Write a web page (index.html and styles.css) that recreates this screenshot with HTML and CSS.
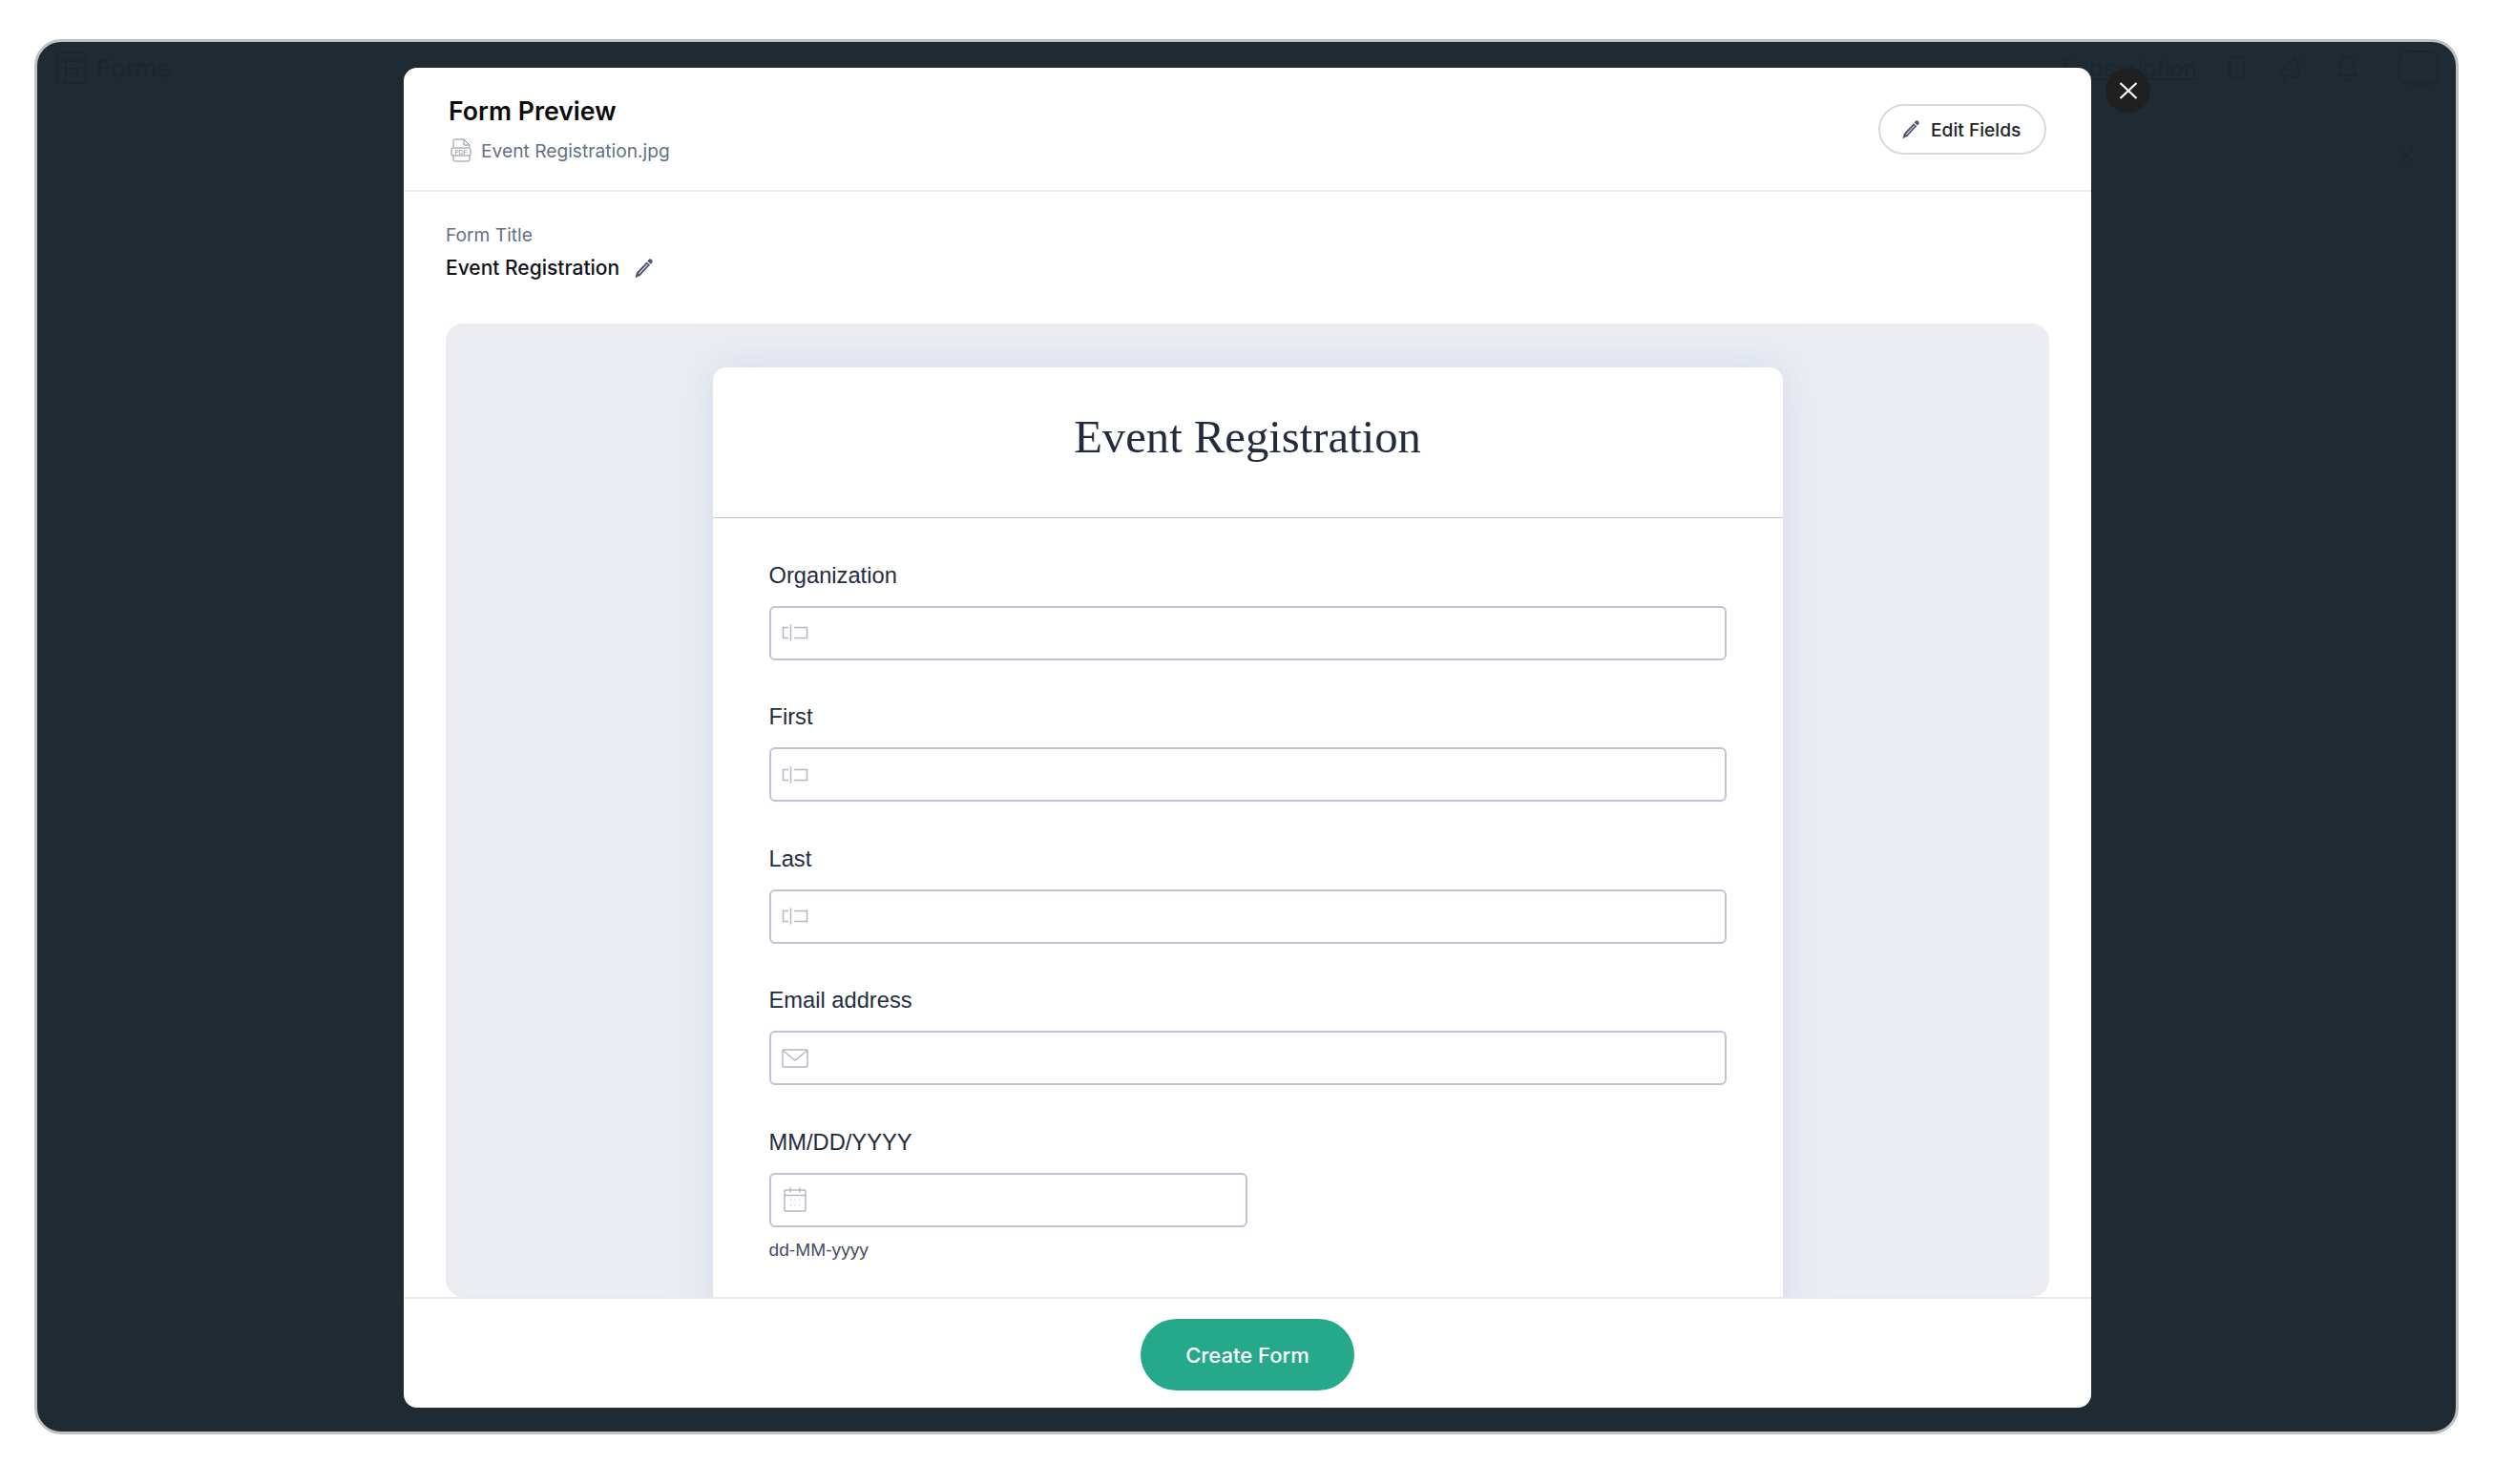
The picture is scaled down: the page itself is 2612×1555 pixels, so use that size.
FILE: index.html
```html
<!DOCTYPE html>
<html lang="en">
<head>
    <meta charset="UTF-8">
    <title>Form Preview</title>
    <link rel="stylesheet" href="styles.css">
</head>
<body>
    <div class="window">
        <div class="topbar">
            <svg class="ghost-logo" width="32" height="34" viewBox="0 0 32 34"><rect x="1" y="1" width="30" height="32" rx="3"/><path d="M1 10h30M10 10v14h12v-6H1M10 24v9"/></svg>
            <span class="ghost-title">Forms</span>
            <span class="ghost-link">Subscription</span>
            <svg class="ghost-icon phone" width="17" height="24" viewBox="0 0 17 24"><rect x="1" y="1" width="15" height="22" rx="2"/></svg>
            <svg class="ghost-icon horn" width="30" height="32" viewBox="0 0 30 32"><path d="M2 22 18 4l4 22-13-2-1 6-3-1 1-5zM24 10l4-3M25 15h4"/></svg>
            <svg class="ghost-icon bell" width="24" height="32" viewBox="0 0 24 32"><path d="M2 24c3-3 3-6 3-12a7 7 0 0 1 14 0c0 6 0 9 3 12zM9 29h6"/></svg>
            <svg class="ghost-icon avatar" width="42" height="36" viewBox="0 0 42 36"><rect x="1" y="1" width="40" height="34" rx="8"/></svg>
        </div>
        <svg class="ghost-x" width="16" height="18" viewBox="0 0 16 18"><path d="M1 1l14 16M15 1 1 17"/></svg>

        <div class="overlay">
            <div class="modal">
                <div class="modal-header">
                    <div>
                        <h1 class="modal-title">Form Preview</h1>
                        <div class="file-name">
                            <svg class="file-icon" width="22" height="25" viewBox="0 0 22 25">
                                <path d="M3 9V2.500A1.500 1.500 0 0 1 4.500 1H14l6 6v2M20 18v4.500a1.500 1.500 0 0 1-1.500 1.500h-14A1.500 1.500 0 0 1 3 22.500V18M14 1v6h6"/>
                                <rect x="1" y="10" width="20" height="8" rx="1"/>
                                <text x="11" y="16.500" text-anchor="middle">PDF</text>
                            </svg>
                            <span>Event Registration.jpg</span>
                        </div>
                    </div>
                    <button class="edit-btn">
                        <svg width="20" height="20" viewBox="0 0 20 20"><path class="pencil" d="M14.600 1.300a2.100 2.100 0 0 1 3.500 2.900l-1 1.200-3.400-2.900zM12.900 3.300l3.400 2.900-9.800 10.600-5 2.400 1.300-5.300z"/><path class="pencil-line" d="M13.800 5.700 5.200 15"/></svg>
                        Edit Fields
                    </button>
                </div>

                <div class="modal-body">
                    <div class="title-label">Form Title</div>
                    <div class="title-row">
                        <span>Event Registration</span>
                        <svg width="21" height="21" viewBox="0 0 20 20"><path class="pencil" d="M14.600 1.300a2.100 2.100 0 0 1 3.500 2.900l-1 1.200-3.400-2.900zM12.900 3.300l3.400 2.900-9.800 10.600-5 2.400 1.300-5.300z"/><path class="pencil-line" d="M13.800 5.700 5.200 15"/></svg>
                    </div>

                    <div class="preview">
                        <div class="paper">
                            <h2 class="paper-title">Event Registration</h2>
                            <div class="paper-fields">
                                <div class="field">
                                    <label>Organization</label>
                                    <div class="input">
                                        <svg class="field-icon" width="28" height="18" viewBox="0 0 28 18"><path d="M7 3.500H1.500v11H7M9.500.500v17M13 3.500h13.500v11H13"/></svg>
                                    </div>
                                </div>
                                <div class="field">
                                    <label>First</label>
                                    <div class="input">
                                        <svg class="field-icon" width="28" height="18" viewBox="0 0 28 18"><path d="M7 3.500H1.500v11H7M9.500.500v17M13 3.500h13.500v11H13"/></svg>
                                    </div>
                                </div>
                                <div class="field">
                                    <label>Last</label>
                                    <div class="input">
                                        <svg class="field-icon" width="28" height="18" viewBox="0 0 28 18"><path d="M7 3.500H1.500v11H7M9.500.500v17M13 3.500h13.500v11H13"/></svg>
                                    </div>
                                </div>
                                <div class="field">
                                    <label>Email address</label>
                                    <div class="input">
                                        <svg class="field-icon" width="28" height="20" viewBox="0 0 28 20"><rect x="1" y="1" width="26" height="18" rx="1"/><path d="M1.500 2 14 12 26.500 2"/></svg>
                                    </div>
                                </div>
                                <div class="field">
                                    <label>MM/DD/YYYY</label>
                                    <div class="input input-short">
                                        <svg class="field-icon calendar" width="24" height="26" viewBox="0 0 24 26"><rect x="1" y="3" width="22" height="22" rx="1"/><path d="M1 8.500h22M7 .500v5M17 .500v5"/><path class="dots" d="M7 13h1M11.500 13h1M16 13h1M7 19h1M11.500 19h1M16 19h1"/></svg>
                                    </div>
                                    <div class="hint">dd-MM-yyyy</div>
                                </div>
                            </div>
                        </div>
                    </div>
                </div>

                <div class="modal-footer">
                    <button class="create-btn">Create Form</button>
                </div>
            </div>
            <button class="close-btn">
                <svg width="20" height="20" viewBox="0 0 20 20"><path d="M1.500 2l17 16M18.500 2l-17 16"/></svg>
            </button>
        </div>
    </div>
</body>
</html>
```

FILE: styles.css
```css
* {
    box-sizing: border-box;
}

html, body {
    height: 100%;
}

body {
    margin: 0;
    padding: 41px 36px 0;
    background-color: white;
    font-family: Inter, "Liberation Sans", sans-serif;
    overflow: hidden;
}

.window {
    position: relative;
    width: 2540px;
    height: 1462px;
    background-color: #1f2a33;
    border: 3px solid #bfc0c1;
    border-radius: 28px;
    overflow: hidden;
}

/* page behind the backdrop, barely visible */
.topbar {
    display: flex;
    align-items: center;
    height: 54px;
    padding: 0 18px 0 20px;
}

.topbar svg {
    fill: none;
    stroke: #1b262e;
    stroke-width: 1.500;
}

.ghost-title {
    margin-left: 10px;
    font-size: 26px;
    font-weight: 500;
    color: #1b262e;
}

.ghost-link {
    margin-left: auto;
    font-size: 24px;
    color: #1b262e;
    text-decoration: underline;
}

.ghost-icon.phone {
    margin-left: 33px;
}

.ghost-icon.horn {
    margin-left: 35px;
}

.ghost-icon.bell {
    margin-left: 30px;
}

.ghost-icon.avatar {
    margin-left: 42px;
}

.ghost-x {
    position: absolute;
    top: 110px;
    right: 43px;
    fill: none;
    stroke: #1b262e;
    stroke-width: 1.500;
}

.overlay {
    position: absolute;
    top: 0;
    left: 0;
    right: 0;
    bottom: 0;
    display: flex;
    align-items: flex-start;
    gap: 15px;
    padding: 27px 0 0 384px;
}

.modal {
    display: flex;
    flex-direction: column;
    width: 1768px;
    height: 1404px;
    background-color: white;
    border-radius: 14px;
    overflow: hidden;
}

.modal-header {
    display: flex;
    align-items: center;
    justify-content: space-between;
    height: 130px;
    padding: 0 47px;
    border-bottom: 2px solid #eceef0;
}

.modal-title {
    margin: 0 0 12px;
    font-size: 26.700px;
    line-height: 33px;
    font-weight: 600;
    color: #0b0b0c;
}

.file-name {
    display: flex;
    align-items: center;
    gap: 10px;
    margin-left: 2px;
    font-size: 19.200px;
    color: #64708a;
}

.file-icon {
    fill: none;
    stroke: #868c9c;
    stroke-width: 1;
}

.file-icon text {
    fill: #868c9c;
    stroke: none;
    font-size: 6.500px;
    font-family: "Liberation Sans", sans-serif;
}

.edit-btn {
    display: flex;
    align-items: center;
    gap: 11px;
    width: 176px;
    height: 53px;
    padding: 2px 0 0 22px;
    font-family: inherit;
    font-size: 19.200px;
    font-weight: 500;
    color: #222427;
    background-color: white;
    border: 2px solid #d3dde0;
    border-radius: 27px;
}

.pencil {
    fill: #4f566f;
}

.pencil-line {
    fill: none;
    stroke: white;
    stroke-width: 1;
}

.modal-body {
    display: flex;
    flex-direction: column;
    flex: 1;
    min-height: 0;
    padding: 32px 44px 0;
}

.title-label {
    font-size: 19.200px;
    line-height: 26px;
    color: #667085;
}

.title-row {
    display: flex;
    align-items: center;
    gap: 15px;
    margin-top: 8px;
    margin-bottom: 44px;
    font-size: 21px;
    line-height: 28px;
    font-weight: 500;
    color: #111318;
}

.preview {
    display: flex;
    justify-content: center;
    flex: 1;
    min-height: 0;
    padding-top: 46px;
    background-color: #ebedf2;
    border-radius: 18px;
    overflow: hidden;
}

.paper {
    width: 1121px;
    height: 1200px;
    background-color: white;
    border-radius: 14px;
    box-shadow: 0 0 40px rgba(190, 202, 230, 0.55);
}

.paper-title {
    height: 158px;
    margin: 0;
    padding-top: 44px;
    text-align: center;
    font-family: "Liberation Serif", serif;
    font-size: 48.700px;
    line-height: 58px;
    font-weight: 400;
    color: #232c3f;
    border-bottom: 1px solid #bfc3d0;
}

.paper-fields {
    padding: 41.500px 59px 0;
}

.field {
    height: 148.600px;
}

.field label {
    display: block;
    height: 50px;
    font-family: "Liberation Sans", sans-serif;
    font-size: 23.700px;
    line-height: 37px;
    color: #232c3f;
}

.input {
    display: flex;
    align-items: center;
    height: 57px;
    padding-left: 11px;
    background-color: white;
    border: 2px solid #c0c3d6;
    border-radius: 6px;
}

.input-short {
    width: 501px;
}

.field-icon {
    fill: none;
    stroke: #b5b8c2;
    stroke-width: 1.500;
}

.calendar {
    margin-left: 2px;
}

.dots {
    stroke-width: 1.200;
}

.hint {
    margin-top: 11px;
    font-family: "Liberation Sans", sans-serif;
    font-size: 19.200px;
    line-height: 26px;
    color: #454c60;
}

.modal-footer {
    display: flex;
    justify-content: center;
    height: 116px;
    padding-top: 21px;
    border-top: 2px solid #e9e9ea;
}

.create-btn {
    width: 224px;
    height: 75px;
    font-family: inherit;
    font-size: 22px;
    font-weight: 500;
    color: white;
    background-color: #26a98b;
    border: none;
    border-radius: 38px;
}

.close-btn {
    display: flex;
    align-items: center;
    justify-content: center;
    width: 47px;
    height: 47px;
    padding: 0;
    background-color: #202020;
    border: none;
    border-radius: 50%;
}

.close-btn svg {
    fill: none;
    stroke: white;
    stroke-width: 2.200;
}
```
